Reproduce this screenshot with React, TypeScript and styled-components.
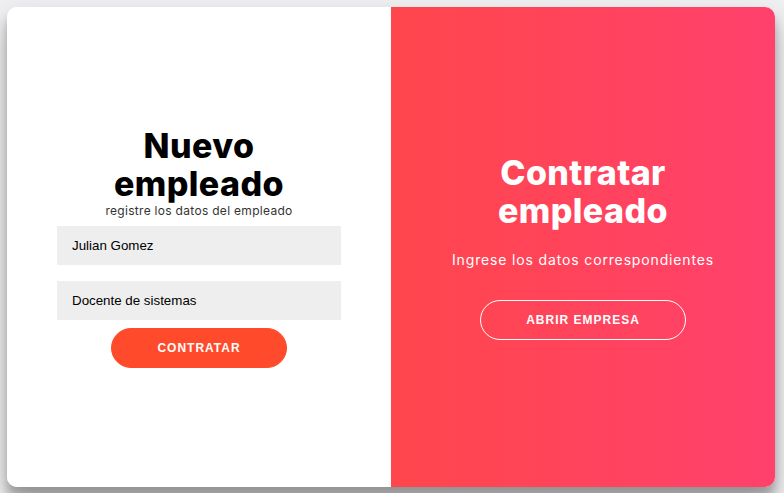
import React from "react";
import styled, { createGlobalStyle } from "styled-components";

const GlobalStyle = createGlobalStyle`
  * { box-sizing: border-box; }
  html, body { margin: 0; padding: 0; overflow: hidden; }
  body {
    background: #f0f0f2;
    font-family: Inter, "Noto Sans", sans-serif;
  }
`;

const Page = styled.div`
  display: flex;
  align-items: center;
  justify-content: center;
  width: 782px;
  height: 494px;
`;

const Card = styled.div`
  display: grid;
  grid-template-columns: 1fr 1fr;
  width: 768px;
  height: 480px;
  background: #fff;
  border-radius: 10px;
  overflow: hidden;
  box-shadow: 0 14px 28px rgba(0, 0, 0, 0.25), 0 10px 10px rgba(0, 0, 0, 0.22);
`;

const Form = styled.form`
  display: flex;
  flex-direction: column;
  align-items: center;
  justify-content: center;
  padding: 0 50px;
  height: 100%;
  text-align: center;
  background: #fff;
`;

const Overlay = styled.div`
  display: flex;
  flex-direction: column;
  align-items: center;
  justify-content: center;
  padding: 0 40px;
  height: 100%;
  text-align: center;
  color: #fff;
  background: linear-gradient(to right, #ff464c, #ff416c);
`;

const Title = styled.h1<{ $light?: boolean }>`
  margin: 0;
  font-family: Inter, "Noto Sans", sans-serif;
  font-weight: 800;
  font-size: 34px;
  line-height: 38px;
  letter-spacing: 0.4px;
  color: ${(p) => (p.$light ? "#fff" : "#000")};
`;

const Sub = styled.span`
  font-size: 12px;
  line-height: 15px;
  letter-spacing: 0.3px;
  color: #333;
`;

const Lead = styled.p`
  margin: 20px 0 30px;
  font-size: 14px;
  line-height: 20px;
  font-weight: 400;
  letter-spacing: 0.85px;
`;

const Input = styled.input`
  width: 100%;
  margin: 8px 0;
  padding: 12px 15px;
  border: none;
  background: #eee;
  font-family: "Liberation Sans", Arial, sans-serif;
  font-size: 13.33px;
  color: #000;
  outline: none;
`;

const Button = styled.button<{ $ghost?: boolean }>`
  border-radius: 20px;
  border: 1px solid ${(p) => (p.$ghost ? "#fff" : "#ff4b2b")};
  background: ${(p) => (p.$ghost ? "transparent" : "#ff4b2b")};
  color: #fff;
  font-family: "Liberation Sans", Arial, sans-serif;
  font-size: 12px;
  font-weight: bold;
  line-height: 14px;
  padding: 12px 45px;
  letter-spacing: 1px;
  text-transform: uppercase;
  cursor: pointer;
`;

export default function App() {
  return (
    <>
      <GlobalStyle />
      <Page>
        <Card>
          <Form onSubmit={(e) => e.preventDefault()}>
            <Title>
              Nuevo
              <br />
              empleado
            </Title>
            <Sub>registre los datos del empleado</Sub>
            <Input type="text" defaultValue="Julian Gomez" />
            <Input type="text" defaultValue="Docente de sistemas" />
            <Button type="submit">Contratar</Button>
          </Form>
          <Overlay>
            <Title $light>
              Contratar
              <br />
              empleado
            </Title>
            <Lead>Ingrese los datos correspondientes</Lead>
            <Button $ghost>Abrir empresa</Button>
          </Overlay>
        </Card>
      </Page>
    </>
  );
}
